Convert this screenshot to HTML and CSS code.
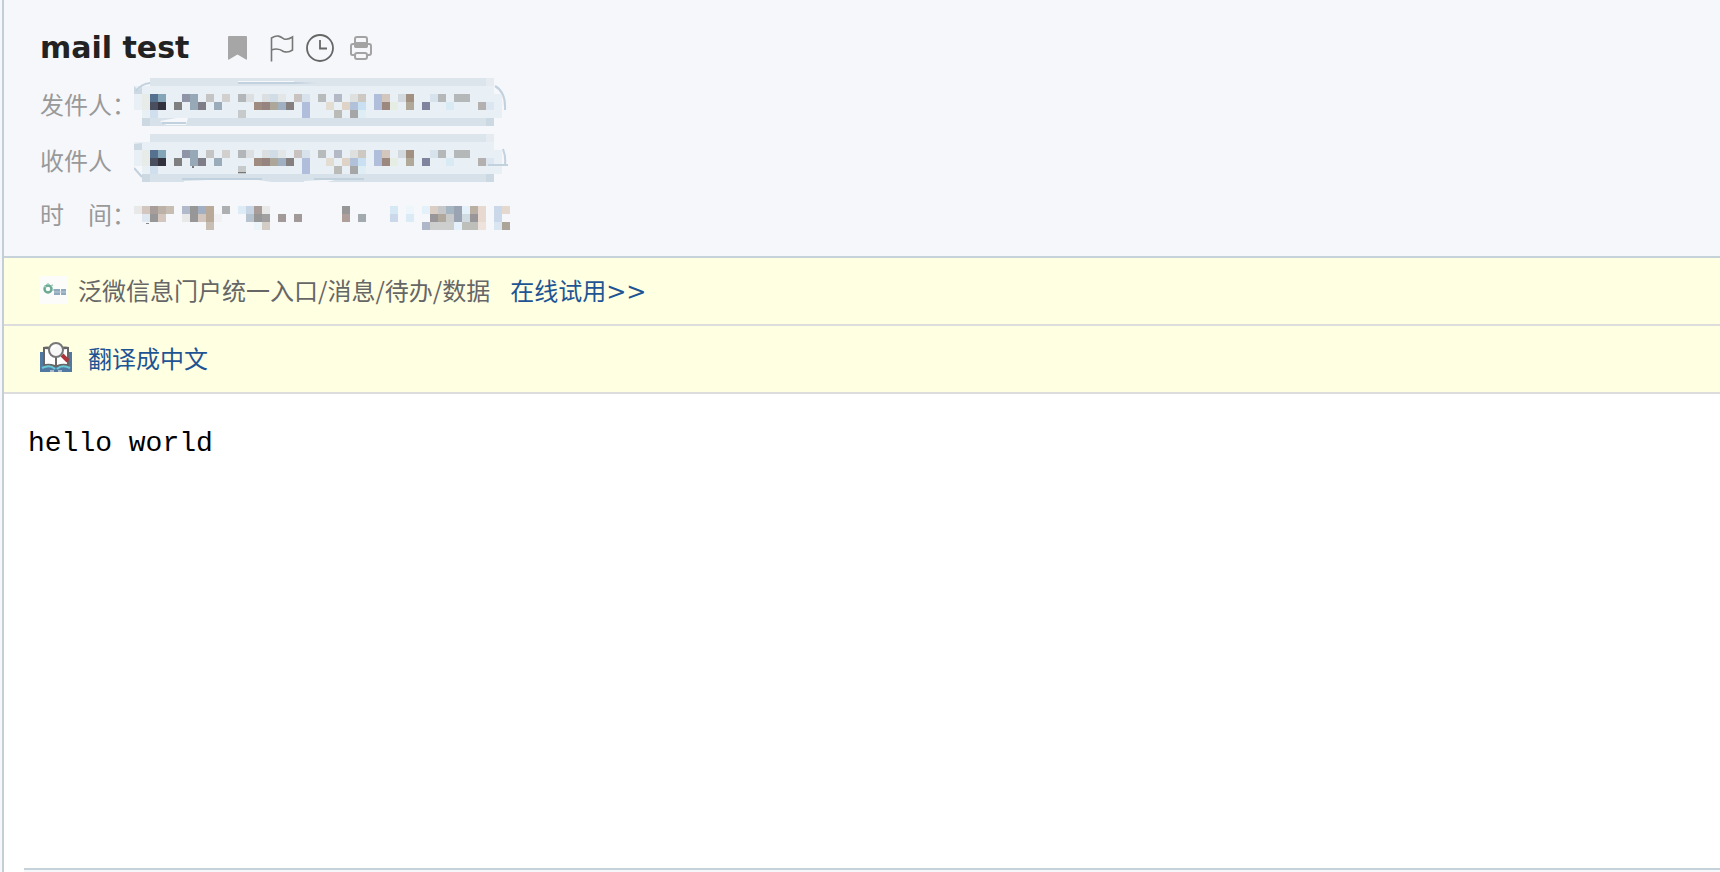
FILE: index.html
```html
<!DOCTYPE html>
<html lang="zh-CN">
<head>
<meta charset="utf-8">
<title>mail test</title>
<link rel="stylesheet" href="styles.css">
</head>
<body>
<main class="mail">
  <header class="mail-header">
    <div class="title-row">
      <h1 class="subject">mail test</h1>
      <div class="tools">
        <button class="tool" type="button" aria-label="标签"><svg width="20" height="28" viewBox="0 0 20 28"><path d="M1 2h17q1 0 1 1v22q0 1-1 .500l-8.500-5-8.500 5q-1 .500-1-.500V3q0-1 1-1z" fill="#a6a6a6"/></svg></button>
        <button class="tool tool-flag" type="button" aria-label="旗标"><svg width="24" height="28" viewBox="0 0 24 28" fill="none" stroke="#777" stroke-width="1.6"><path d="M1.500 27.500V4C8 0 11 3 14 5q4 1 8.500-2v13q-4 3-9 1.500Q8 13.500 1.500 16"/></svg></button>
        <button class="tool tool-clock" type="button" aria-label="提醒"><svg width="28" height="28" viewBox="0 0 28 28" fill="none" stroke="#666" stroke-width="1.8"><circle cx="14" cy="14" r="13"/><path d="M14 6v8.500h7"/></svg></button>
        <button class="tool tool-print" type="button" aria-label="打印"><svg width="24" height="28" viewBox="0 0 24 28" fill="none" stroke="#a3a3a3" stroke-width="2"><path d="M5 21H3.500q-1.500 0-1.500-1.500v-7.500q0-2 2-2h2M18 21h2q2 0 2-2v-7q0-2-2-2h-2"/><rect x="6" y="3" width="12" height="10" rx="2"/><path d="M5 8h14v4q0 2-2 2H7q-2 0-2-2z" fill="#a3a3a3" stroke="none"/><rect x="6" y="19" width="12" height="6" rx="2"/></svg></button>
      </div>
    </div>
    <dl class="fields">
      <div class="field">
        <dt>发件人：</dt>
        <dd><svg class="mosaic" width="376" height="56" viewBox="0 0 376 56" aria-hidden="true">
          <defs><g id="address">
            <path fill="#dde5ec" d="M16 0h344v8H16z"/><path fill="#e6ebf2" d="M352 0h8v8h-8z"/>
            <path fill="#e8eff5" d="M0 8h360v8h8v24H8V32H0z"/>
            <path fill="#d7e1e9" d="M8 40h352v8H8z"/><path fill="#ccd9e3" d="M8 40h8v8H8zM352 40h8v8h-8z"/>
            <path fill="#56708f" d="M16 16h8v8h-8z"/><path fill="#84a4b7" d="M24 16h8v8h-8z"/><path fill="#4a4f60" d="M16 24h8v8h-8z"/><path fill="#32323e" d="M24 24h8v8h-8z"/><path fill="#d0dfed" d="M16 32h8v8h-8z"/><path fill="#e8ece9" d="M8 16h8v16H8z"/>
            <path fill="#7f7f7f" d="M40 24h8v8h-8z"/><path fill="#8f94a6" d="M48 16h8v8h-8z"/><path fill="#97a9b7" d="M56 16h8v16h-8z"/><path fill="#7f7e88" d="M64 24h8v8h-8z"/><path fill="#c4c4c4" d="M72 16h8v8h-8z"/><path fill="#9aabba" d="M80 24h8v8h-8z"/><path fill="#d2d0ce" d="M88 16h8v8h-8z"/>
            <path fill="#b2b6b8" d="M104 16h8v8h-8z"/><path fill="#dcdfe1" d="M112 16h8v8h-8zM128 16h8v8h-8z"/><path fill="#c7caca" d="M104 32h8v8h-8z"/><path fill="#9f8b80" d="M120 24h8v8h-8z"/><path fill="#958480" d="M128 24h8v8h-8z"/><path fill="#aca799" d="M136 24h8v8h-8z"/><path fill="#d0dce6" d="M136 16h8v8h-8z"/><path fill="#e3e6e6" d="M144 16h8v8h-8z"/><path fill="#a0b0c0" d="M144 24h8v8h-8z"/><path fill="#857f7f" d="M152 24h8v8h-8z"/>
            <path fill="#c8c3c0" d="M160 16h8v8h-8z"/><path fill="#d8e2ed" d="M168 16h8v8h-8z"/><path fill="#b0bddb" d="M168 24h8v16h-8zM240 16h8v16h-8z"/><path fill="#b8bbbc" d="M184 16h8v8h-8z"/><path fill="#e3dcd2" d="M192 24h8v8h-8z"/><path fill="#b4bac5" d="M200 16h8v8h-8z"/><path fill="#babbb7" d="M200 32h8v8h-8z"/><path fill="#dfd3c8" d="M208 24h8v8h-8z"/><path fill="#dedfdf" d="M216 16h8v8h-8z"/><path fill="#b0c1d9" d="M216 24h8v8h-8z"/><path fill="#a6a6a6" d="M216 32h8v8h-8z"/><path fill="#cdc8c2" d="M224 16h8v8h-8z"/><path fill="#c8e0f2" d="M224 24h8v8h-8z"/><path fill="#dfedf5" d="M224 32h8v8h-8z"/>
            <path fill="#d3c6bd" d="M248 16h8v8h-8z"/><path fill="#9c887f" d="M248 24h8v8h-8z"/><path fill="#e6eee4" d="M256 24h8v8h-8z"/><path fill="#d2d9df" d="M264 16h8v8h-8z"/><path fill="#a29080" d="M272 16h8v8h-8z"/><path fill="#b0a99a" d="M272 24h8v8h-8z"/><path fill="#80849d" d="M288 24h8v8h-8z"/><path fill="#d6e3ec" d="M296 16h8v8h-8z"/><path fill="#b4b8b9" d="M304 16h8v8h-8zM320 16h16v8h-16z"/><path fill="#d8ebf4" d="M312 24h8v8h-8z"/><path fill="#b5b0b0" d="M344 24h8v8h-8z"/><path fill="#dce6f0" d="M352 24h8v8h-8z"/>
          </g></defs>
          <use href="#address"/>
          <path fill="#f5f7fb" d="M104 3h80v3h-80zM26 43l16-3h12l-2 7H32z"/>
          <path fill="#dde5ec" d="M16 0l6 0-6 4zM160 2h24v5h-24z"/>
          <path fill="#ccd9e3" d="M0 8l4 4 4-3v7H0z"/>
          <g fill="none" stroke="#c1d1de" stroke-width="2"><path d="M2 13q5-7 14-8M28 45h24M361 8q11 6 10 24"/></g>
          <path fill="#c1d1de" d="M104 4h56l24 1-24 1h-56z"/>
        </svg></dd>
      </div>
      <div class="field">
        <dt>收件人</dt>
        <dd><svg class="mosaic" width="376" height="56" viewBox="0 0 376 56" aria-hidden="true">
          <use href="#address"/>
          <path fill="#ccd9e3" d="M0 10l8-1v7H0z"/>
          <path fill="#f5f7fb" d="M0 34l8 6v8H0z"/>
          <path fill="#f5f7fb" d="M50 47l24-1h50l14 2H50zM170 47l35-2-12 3h-23z"/>
          <g fill="none" stroke="#c1d1de" stroke-width="2"><path d="M0 34l8 9M369 15q3 8 2 15M48 45h80M180 45h50M354 31h20"/></g>
          <path fill="#777" d="M58 32h2v2h-2zM104 38h8v1h-8z"/>
        </svg></dd>
      </div>
      <div class="field field-time">
        <dt>时　间：</dt>
        <dd><svg class="mosaic" width="384" height="56" viewBox="0 0 384 56" aria-hidden="true">
          <path fill="#e8e8e9" d="M0 16h8v8H0zM48 24h8v8h-8zM128 16h8v8h-8z"/><path fill="#d2c6be" d="M8 16h8v8H8zM24 24h8v8h-8zM64 24h8v8h-8z"/><path fill="#a89d99" d="M16 16h8v8h-8zM120 16h8v8h-8z"/><path fill="#bcb1a6" d="M24 16h8v8h-8z"/><path fill="#c8bdb3" d="M32 16h8v8h-8z"/><path fill="#dfe8f1" d="M8 24h8v8H8z"/><path fill="#979797" d="M16 24h8v8h-8zM56 16h8v16h-8zM120 24h8v8h-8zM208 16h8v8h-8z"/>
          <path fill="#b0bacb" d="M48 16h8v8h-8z"/><path fill="#a2aec1" d="M64 16h8v8h-8z"/><path fill="#b8a998" d="M72 16h8v16h-8z"/><path fill="#c8beb3" d="M72 32h8v8h-8z"/><path fill="#f0f0f5" d="M80 24h8v8h-8z"/><path fill="#aeafb1" d="M88 16h8v8h-8z"/>
          <path fill="#dcebf5" d="M104 16h8v8h-8z"/><path fill="#c8d5e5" d="M112 16h8v8h-8z"/><path fill="#b7c4cf" d="M112 24h8v8h-8z"/><path fill="#9fa09f" d="M128 24h8v8h-8z"/><path fill="#ebf4f8" d="M120 32h8v8h-8z"/><path fill="#d3cdc6" d="M128 32h8v8h-8z"/><path fill="#a19a98" d="M144 24h8v8h-8zM160 24h8v8h-8z"/>
          <path fill="#ae9f9a" d="M208 24h8v8h-8z"/><path fill="#a2a9af" d="M224 24h8v8h-8z"/><path fill="#d5e8f3" d="M256 16h8v8h-8z"/><path fill="#cad8ea" d="M256 24h8v8h-8z"/><path fill="#edf6fa" d="M272 16h8v8h-8z"/><path fill="#dbebf6" d="M272 24h8v8h-8z"/>
          <path fill="#e5f1fa" d="M288 16h8v8h-8zM328 16h8v8h-8zM320 32h8v8h-8z"/><path fill="#d9cdc4" d="M296 16h8v8h-8z"/><path fill="#c6c7c9" d="M304 16h8v8h-8z"/><path fill="#a5b5c2" d="M312 16h8v8h-8z"/><path fill="#9aa3b2" d="M320 16h8v16h-8z"/><path fill="#b9afa2" d="M336 16h8v8h-8z"/><path fill="#e7d9cf" d="M344 16h8v16h-8z"/><path fill="#99969a" d="M296 24h8v8h-8zM336 24h8v8h-8z"/><path fill="#b0a89c" d="M304 24h8v8h-8z"/><path fill="#c8cac9" d="M312 24h8v8h-8z"/><path fill="#cfdbe1" d="M328 24h8v8h-8z"/><path fill="#aeb8c9" d="M288 32h8v8h-8z"/><path fill="#cdcfcf" d="M296 32h24v8h-24z"/><path fill="#bebfbb" d="M328 32h16v8h-16z"/><path fill="#eee3dc" d="M344 32h8v8h-8z"/>
          <path fill="#cbd8e9" d="M368 16h0zM366 16h8v16h-8z" transform="translate(-6)"/><path fill="#e5d9cf" d="M368 16h8v8h-8z"/><path fill="#dae5f2" d="M360 32h8v8h-8z"/><path fill="#aca399" d="M368 32h8v8h-8z"/><path fill="#888" d="M12 33h3v1h-3z"/>
        </svg></dd>
      </div>
    </dl>
  </header>
  <section class="notice">
    <svg class="promo-icon" width="28" height="28" viewBox="0 0 28 28" aria-hidden="true"><path fill="#fcfdfb" d="M0 0h28v28H0z"/><circle cx="8" cy="13" r="3.500" fill="none" stroke="#69aa91" stroke-width="2.500"/><path d="M4 10l2 1M8 7v2M11 10l2-1M12 14h2" stroke="#a5cdbb" stroke-width="1.500"/><path fill="#8fa9bd" d="M14 13h6v6h-6zM21 13h5v6h-5z"/><path d="M14 16h12" stroke="#bccbd7"/></svg>
    <span>泛微信息门户统一入口/消息/待办/数据</span>
    <a class="trial" href="#trial">在线试用<span class="arrows">&gt;&gt;</span></a>
  </section>
  <section class="notice">
    <svg class="book-icon" width="32" height="32" viewBox="0 0 32 32" aria-hidden="true"><path fill="#5178a0" d="M0 10h32v20H0z"/><path fill="#666" d="M3 5q7-2 13 3 6-5 13-3v20H3z"/><path fill="#fff" d="M5 7q6 0 10 4v12q-5-2-10-1zM17 11q4-4 10-4v15q-5-1-10 1z"/><path d="M2 26q8-4 13 1M17 27q5-5 13-1" fill="none" stroke="#69c8d5" stroke-width="2"/><path d="M10 29h4M18 29h4" stroke="#a5bbcc" stroke-width="2"/><path d="M22 13l6 6" stroke="#ad3439" stroke-width="4"/><circle cx="16" cy="8" r="7" fill="#f7f7f7" stroke="#777" stroke-width="2"/><path d="M12 7q1-3 4-3" fill="none" stroke="#fff" stroke-width="2"/></svg>
    <a class="translate" href="#translate">翻译成中文</a>
  </section>
  <article class="message">hello world</article>
</main>
</body>
</html>
```

FILE: styles.css
```css
* { box-sizing: border-box; }

body {
  margin: 0;
  background: #f5f7fb;
  color: #666;
  font: 24px/36px "Noto Sans CJK SC", sans-serif;
}

.mail {
  display: flex;
  flex-direction: column;
  min-height: 100vh;
  margin-left: 2px;
  border-left: 2px solid #c4ced6;
  background: #fff;
}

.mail-header {
  padding: 28px 36px 10px;
  border-bottom: 2px solid #c6d2d9;
  background: #f5f7fb;
}

.title-row {
  display: flex;
  align-items: center;
  height: 40px;
  margin-bottom: 10px;
}

.subject {
  margin: 0;
  width: 188px;
  color: #222;
  font: bold 30px/36px "DejaVu Sans", sans-serif;
  white-space: nowrap;
}

.tools { display: flex; align-items: center; }

.tool {
  padding: 0;
  border: 0;
  background: none;
  cursor: pointer;
}

.tool svg, .mosaic { display: block; }
.tool-flag { margin-left: 22px; }
.tool-clock { margin-left: 12px; }
.tool-print { margin-left: 15px; }

.fields { margin: 0; }

.field {
  display: flex;
  height: 56px;
}

.field dt {
  width: 94px;
  padding-top: 8px;
  color: #999;
  white-space: nowrap;
}

.field-time dt { padding-top: 6px; }
.field dd { margin: 0; }

.notice {
  display: flex;
  align-items: center;
  height: 68px;
  padding: 0 36px 2px;
  border-bottom: 2px solid #ddd;
  background: #ffffe2;
}

.notice a { color: #1e5494; text-decoration: none; }
.notice a:hover { text-decoration: underline; }
.promo-icon { margin-right: 10px; }
.trial { margin-left: 20px; }
.arrows { font-family: "DejaVu Sans", sans-serif; line-height: 1; }
.book-icon { margin-right: 16px; }

.message {
  flex: 1;
  margin-bottom: 2px;
  padding: 30px 24px;
  color: #000;
  font: 28px/40px "Liberation Mono", monospace;
}

.mail::after {
  content: "";
  height: 2px;
  margin-left: 20px;
  border-top: 2px solid #c6d2d9;
  background: #f5f7fb;
}
```
